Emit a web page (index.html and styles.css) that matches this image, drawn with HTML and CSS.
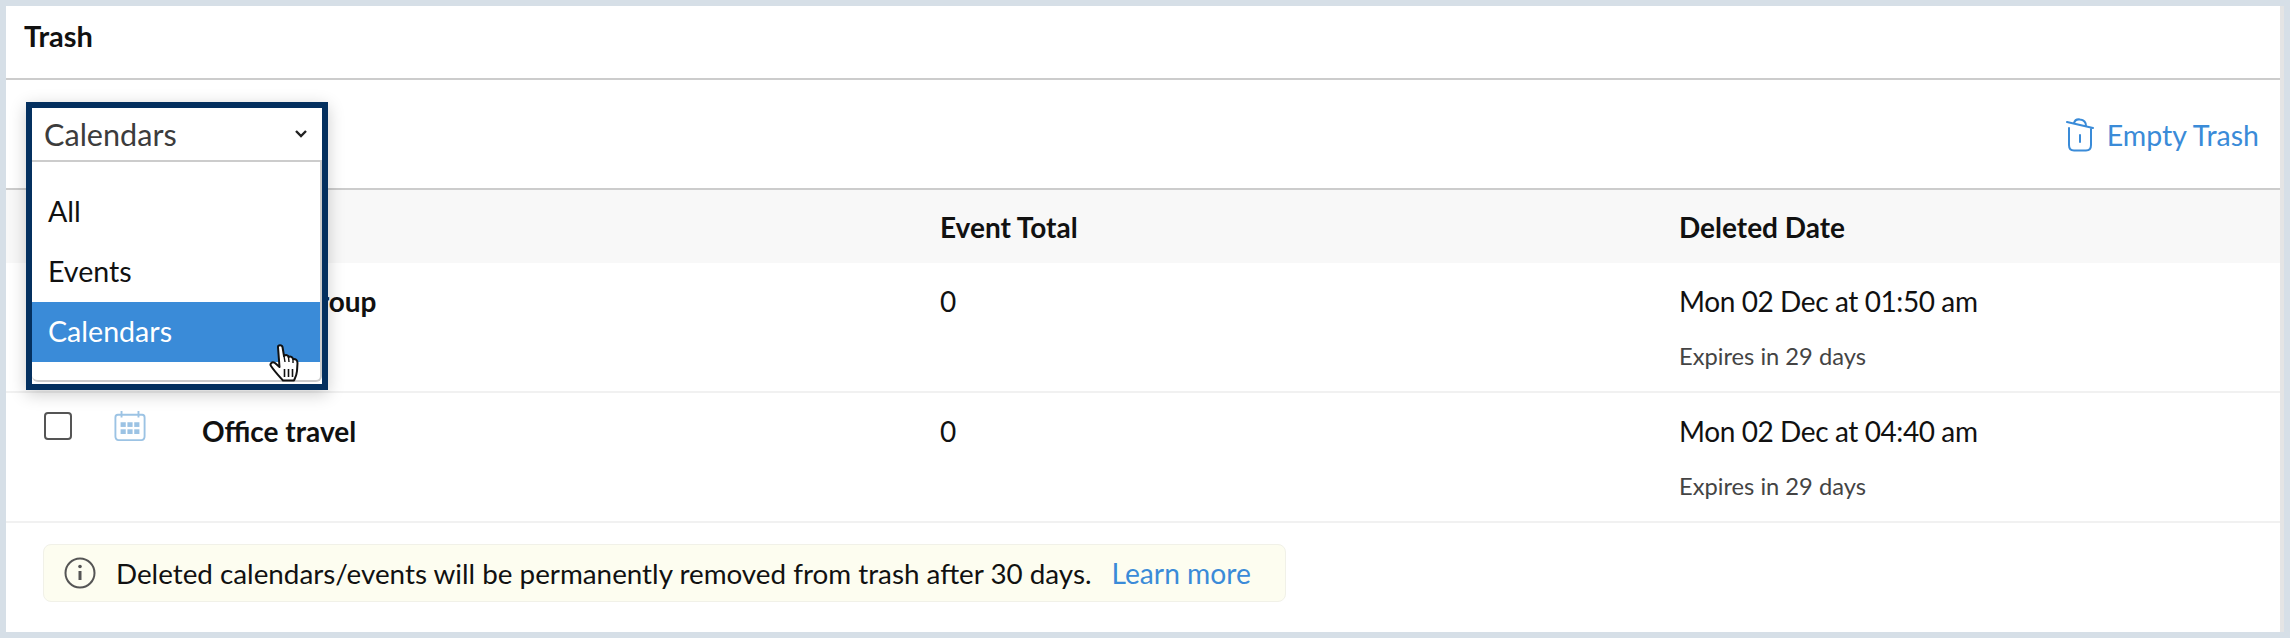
FILE: index.html
```html
<!DOCTYPE html>
<html lang="en">
<head>
    <meta charset="UTF-8">
    <title>Trash</title>
    <link rel="stylesheet" href="styles.css">
</head>
<body>
    <div class="panel">
        <div class="title-bar">Trash</div>

        <div class="toolbar">
            <a class="empty-trash">
                <svg class="trash-icon" width="28" height="34" viewBox="0 0 28 34" fill="none" stroke="#3a8bd8" stroke-width="2" stroke-linecap="round">
                    <path d="M1 4 L27 10"/>
                    <path d="M8 5 C9 1.5 11 1 14 1.5 C18 2 20 3.5 20 8"/>
                    <path d="M3 10 V27 C3 31 5 32.5 8 32.5 H20 C23 32.5 25 31 25 27 V11"/>
                    <path d="M14 17 V24"/>
                </svg>
                <span>Empty Trash</span>
            </a>
        </div>

        <div class="table-head">
            <div class="col-name"></div>
            <div class="col-total">Event Total</div>
            <div class="col-date">Deleted Date</div>
        </div>

        <div class="table-row">
            <div class="col-check"><span class="checkbox"></span></div>
            <div class="col-icon">
                <svg width="32" height="32" viewBox="0 0 34 34" fill="none" stroke="#9cc3e4" stroke-width="2">
                    <path d="M8 5 H4 C2.5 5 1.5 6 1.5 8 V28 C1.5 30.5 3 32 5 32 H29 C31 32 32.5 30.5 32.5 28 V8 C32.5 6 31.5 5 30 5 H26"/>
                    <path d="M8 1 V8 M26 1 V8 M8 5 H26"/>
                </svg>
            </div>
            <div class="col-title">Holiday group</div>
            <div class="col-total">0</div>
            <div class="col-date">
                <div class="date-text">Mon 02 Dec at 01:50 am</div>
                <div class="expires">Expires in 29 days</div>
            </div>
        </div>

        <div class="table-row">
            <div class="col-check"><span class="checkbox"></span></div>
            <div class="col-icon">
                <svg width="32" height="32" viewBox="0 0 34 34" fill="none" stroke="#9cc3e4" stroke-width="2">
                    <path d="M8 5 H4 C2.5 5 1.5 6 1.5 8 V28 C1.5 30.5 3 32 5 32 H29 C31 32 32.5 30.5 32.5 28 V8 C32.5 6 31.5 5 30 5 H26"/>
                    <path d="M8 1 V8 M26 1 V8 M8 5 H26"/>
                    <g fill="#9cc3e4" stroke="none">
                        <rect x="7" y="13" width="5.5" height="5"/>
                        <rect x="14.25" y="13" width="5.5" height="5"/>
                        <rect x="21.5" y="13" width="5.5" height="5"/>
                        <rect x="7" y="20.5" width="5.5" height="5"/>
                        <rect x="14.25" y="20.5" width="5.5" height="5"/>
                        <rect x="21.5" y="20.5" width="5.5" height="5"/>
                    </g>
                </svg>
            </div>
            <div class="col-title">Office travel</div>
            <div class="col-total">0</div>
            <div class="col-date">
                <div class="date-text">Mon 02 Dec at 04:40 am</div>
                <div class="expires">Expires in 29 days</div>
            </div>
        </div>

        <div class="note-wrap">
            <div class="note">
                <svg width="32" height="32" viewBox="0 0 32 32" fill="none" stroke="#555" stroke-width="2">
                    <circle cx="16" cy="16" r="14.5"/>
                    <path d="M16 14 V23" stroke-width="3"/>
                    <circle cx="16" cy="9.5" r="1.8" fill="#555" stroke="none"/>
                </svg>
                <span class="note-text">Deleted calendars/events will be permanently removed from trash after 30 days.</span>
                <a class="learn-more">Learn more</a>
            </div>
        </div>

        <div class="dropdown">
            <div class="select-box">
                <span>Calendars</span>
                <svg width="14" height="10" viewBox="0 0 14 10" fill="none" stroke="#222" stroke-width="2.4">
                    <path d="M2 2 L7 7 L12 2"/>
                </svg>
            </div>
            <div class="menu">
                <div class="menu-item">All</div>
                <div class="menu-item">Events</div>
                <div class="menu-item active">Calendars</div>
            </div>
        </div>

        <svg class="cursor" width="32" height="38" viewBox="0 0 32 38">
            <path d="M9 3 C9 0.5 13 0.5 13.5 3 L15 12 C17 10.5 19 11 19.5 13 C21.5 12 23.5 13 24 15 C26.5 14.5 28.5 16 28.5 19 L28 27 C27.5 32 26 34 25 36.5 H14 C10 32 6 28 2 22 C0.5 20 3 17 6 19 L10.5 23 Z" fill="#fff" stroke="#111" stroke-width="2" stroke-linejoin="round"/>
            <path d="M15 12 L16 18 M19.5 13 L20 18 M24 15 L24 19" stroke="#111" stroke-width="1.4" fill="none"/>
            <path d="M15.5 25 V33 M19.5 25 V33 M23.5 25 V33" stroke="#111" stroke-width="1.6" fill="none"/>
        </svg>
    </div>
</body>
</html>
```

FILE: styles.css
```css
html, body {
    margin: 0;
    height: 100%;
}
body {
    font-family: "Lato", "Noto Sans", sans-serif;
    background-color: #d6dfe7;
    padding: 6px;
    box-sizing: border-box;
    color: #111;
    font-size: 28px;
}
.panel {
    position: relative;
    background: white;
    height: 626px;
    width: 2274px;
    border-right: 4px solid #e4e4e4;
    overflow: hidden;
}
.title-bar {
    height: 72px;
    line-height: 59px;
    padding-left: 18px;
    font-size: 29px;
    font-weight: 700;
    border-bottom: 2px solid #cccccc;
}
.toolbar {
    height: 108px;
    display: flex;
    align-items: center;
    justify-content: flex-end;
    padding-right: 21px;
    border-bottom: 2px solid #cccccc;
}
.empty-trash {
    display: flex;
    align-items: center;
    gap: 13px;
    padding-top: 2px;
    color: #3a8bd8;
    font-size: 28.5px;
}
.table-head {
    display: flex;
    height: 73px;
    align-items: center;
    background: #f8f8f8;
    font-weight: 700;
}
.col-name {
    width: 934px;
    flex: none;
}
.col-total {
    width: 739px;
    flex: none;
}
.col-date {
    flex: 1;
}
.date-text {
    letter-spacing: -0.4px;
}
.table-row {
    display: flex;
    height: 130px;
    padding-top: 21px;
    box-sizing: border-box;
    border-bottom: 2px solid #f1f1f1;
}
.col-check {
    flex: none;
    width: 108px;
    padding-left: 38px;
    box-sizing: border-box;
}
.checkbox {
    display: block;
    width: 24px;
    height: 24px;
    border: 2px solid #555;
    border-radius: 4px;
    margin-top: -2px;
}
.col-icon {
    flex: none;
    width: 88px;
    margin-top: -4px;
}
.col-title {
    width: 738px;
    flex: none;
    font-weight: 700;
}
.expires {
    font-size: 23.7px;
    color: #444;
    margin-top: 24px;
}
.note-wrap {
    padding: 21px 0 0 37px;
}
.note {
    display: inline-flex;
    align-items: center;
    height: 58px;
    padding: 0 34px 0 20px;
    background: #fdfdf0;
    border: 1px solid #f1f1e8;
    border-radius: 8px;
    box-sizing: border-box;
    font-size: 27.8px;
}
.note-text {
    margin-left: 20px;
}
.learn-more {
    margin-left: 20px;
    font-size: 28.2px;
    color: #3a8bd8;
}
.dropdown {
    position: absolute;
    left: 20px;
    top: 96px;
    width: 290px;
    height: 276px;
    border: 6px solid #04305f;
    background: white;
    box-shadow: 0 4px 16px rgba(0, 0, 0, 0.2);
}
.select-box {
    height: 52px;
    display: flex;
    align-items: center;
    justify-content: space-between;
    padding: 0 14px 0 12px;
    font-size: 30.6px;
    color: #3c3c3c;
}
.menu {
    width: 290px;
    height: 222px;
    border-top: 2px solid #cccccc;
    border-right: 2px solid #cccccc;
    border-bottom: 2px solid #cccccc;
    border-radius: 0 0 6px 6px;
    padding-top: 20px;
    box-sizing: border-box;
}
.menu-item {
    height: 60px;
    line-height: 59px;
    padding-left: 16px;
    font-size: 28.6px;
}
.menu-item.active {
    background: #3a8bd8;
    color: white;
}
.cursor {
    position: absolute;
    left: 263px;
    top: 338px;
}
```
